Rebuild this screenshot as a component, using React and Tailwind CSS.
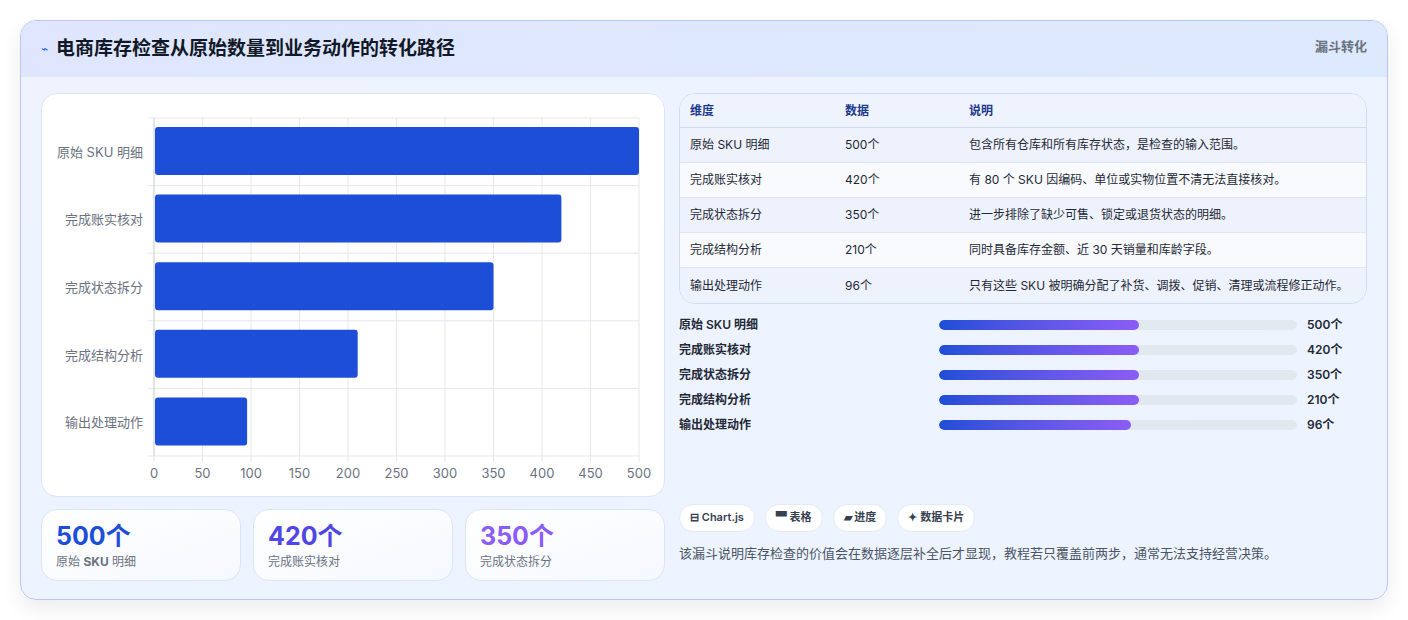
import React from 'react';

const rows = [
  { name: '原始 SKU 明细', v: 500, desc: '包含所有仓库和所有库存状态，是检查的输入范围。', p: 200 },
  { name: '完成账实核对', v: 420, desc: '有 80 个 SKU 因编码、单位或实物位置不清无法直接核对。', p: 200 },
  { name: '完成状态拆分', v: 350, desc: '进一步排除了缺少可售、锁定或退货状态的明细。', p: 200 },
  { name: '完成结构分析', v: 210, desc: '同时具备库存金额、近 30 天销量和库龄字段。', p: 200 },
  { name: '输出处理动作', v: 96, desc: '只有这些 SKU 被明确分配了补货、调拨、促销、清理或流程修正动作。', p: 192 },
];

const font = { fontFamily: 'Inter, "Noto Sans CJK SC", sans-serif' };

function Chart() {
  const x0 = 112, x1 = 597, y0 = 24, y1 = 362;
  const rh = (y1 - y0) / 5;
  const ticks = [0, 50, 100, 150, 200, 250, 300, 350, 400, 450, 500];
  return (
    <svg width="622" height="402" className="block">
      {ticks.map(t => {
        const x = x0 + (t / 500) * (x1 - x0);
        return (
          <g key={t}>
            <line x1={x} x2={x} y1={y0} y2={y1 + 6} stroke="#e5e7eb" />
            <text x={x} y={y1 + 22} textAnchor="middle" fontSize="13" fill="#6b7280" style={font}>{t}</text>
          </g>
        );
      })}
      {[0, 1, 2, 3, 4, 5].map(i => (
        <line key={i} x1={x0 - 6} x2={x1} y1={y0 + i * rh} y2={y0 + i * rh} stroke="#e5e7eb" />
      ))}
      {rows.map((r, i) => (
        <g key={r.name}>
          <rect x={x0 + 1} y={y0 + i * rh + 9} width={(r.v / 500) * (x1 - x0) - 1} height={48} rx="3" fill="#1d4ed8" />
          <text x={x0 - 11} y={y0 + i * rh + rh / 2 + 5} textAnchor="end" fontSize="13" fill="#6b7280" style={font}>{r.name}</text>
        </g>
      ))}
      <line x1={x0} x2={x0} y1={y0} y2={y1} stroke="#d1d5db" />
    </svg>
  );
}

export default function App() {
  return (
    <div className="w-[1408px] h-[620px] bg-white p-5" style={font}>
      <div className="h-[580px] rounded-2xl border border-[#b9c8f0] bg-gradient-to-br from-[#eef3fe] to-[#edf4ff] overflow-hidden shadow-[0_8px_20px_rgba(0,0,0,0.08)]">
        <div className="h-14 bg-gradient-to-r from-[#dfe6fd] to-[#dde9fd] flex items-start justify-between px-5">
          <div className="flex items-center gap-2 h-14">
            <span className="text-[#2563eb] text-xs">⌁</span>
            <h1 className="text-[19px] font-bold text-[#111827]">电商库存检查从原始数量到业务动作的转化路径</h1>
          </div>
          <span className="mt-4 text-[13px] font-semibold text-[#6b7280]">漏斗转化</span>
        </div>
        <div className="flex gap-[14px] px-5 pt-4">
          <div className="w-[624px] flex flex-col gap-3">
            <div className="h-[404px] bg-white rounded-2xl border border-[#dde5f5]">
              <Chart />
            </div>
            <div className="grid grid-cols-3 gap-3">
              {[['500个', 'text-[#1d4ed8]', 0], ['420个', 'text-[#4f46e5]', 1], ['350个', 'text-[#8b5cf6]', 2]].map(([n, c, i]) => (
                <div key={n} className="h-[72px] rounded-2xl bg-gradient-to-br from-white to-[#f5f8ff] border border-[#dde5f5] px-[14px] pt-3">
                  <div className={`text-[25px] font-bold leading-7 ${c}`}>{n}</div>
                  <div className="text-xs text-[#6b7280] mt-1">{i === 0 ? <>原始 <b>SKU</b> 明细</> : rows[i].name}</div>
                </div>
              ))}
            </div>
          </div>
          <div className="flex-1 flex flex-col">
            <div className="rounded-2xl border border-[#d3dcee] overflow-hidden text-xs text-[#1f2937]">
              <div className="flex h-[34px] items-center bg-[#eef3fe] border-b border-[#d3dcee] text-[#1e3a8a] font-semibold">
                <div className="w-[165px] pl-[10px]">维度</div>
                <div className="w-[124px]">数据</div>
                <div>说明</div>
              </div>
              {rows.map((r, i) => (
                <div key={r.name} className={`flex h-[35px] items-center ${i < 4 ? 'border-b border-[#dde5f0]' : ''} ${i % 2 ? 'bg-[#f8fafd]' : 'bg-[#eef2fc]'}`}>
                  <div className="w-[165px] pl-[10px]">{r.name}</div>
                  <div className="w-[124px]">{r.v}个</div>
                  <div>{r.desc}</div>
                </div>
              ))}
            </div>
            <div className="mt-3 flex flex-col gap-[7px]">
              {rows.map(r => (
                <div key={r.name} className="flex items-center h-[18px] text-xs font-semibold text-[#1f2937]">
                  <div className="w-[260px]">{r.name}</div>
                  <div className="w-[358px] h-[10px] rounded-full bg-[#e2e8f0] overflow-hidden">
                    <div className="h-full rounded-full bg-gradient-to-r from-[#1d4ed8] to-[#8b5cf6]" style={{ width: r.p }} />
                  </div>
                  <div className="ml-[10px]">{r.v}个</div>
                </div>
              ))}
            </div>
            <div className="mt-auto mb-[18px]">
              <div className="flex gap-[10px]">
                {['⊟ Chart.js', '▀ 表格', '▰ 进度', '✦ 数据卡片'].map(t => (
                  <span key={t} className="h-7 px-[10px] flex items-center rounded-full bg-white border border-[#e5eaf3] text-[11px] font-semibold text-[#374151]">{t}</span>
                ))}
              </div>
              <p className="mt-3 text-[13px] text-[#4b5563]">该漏斗说明库存检查的价值会在数据逐层补全后才显现，教程若只覆盖前两步，通常无法支持经营决策。</p>
            </div>
          </div>
        </div>
      </div>
    </div>
  );
}
